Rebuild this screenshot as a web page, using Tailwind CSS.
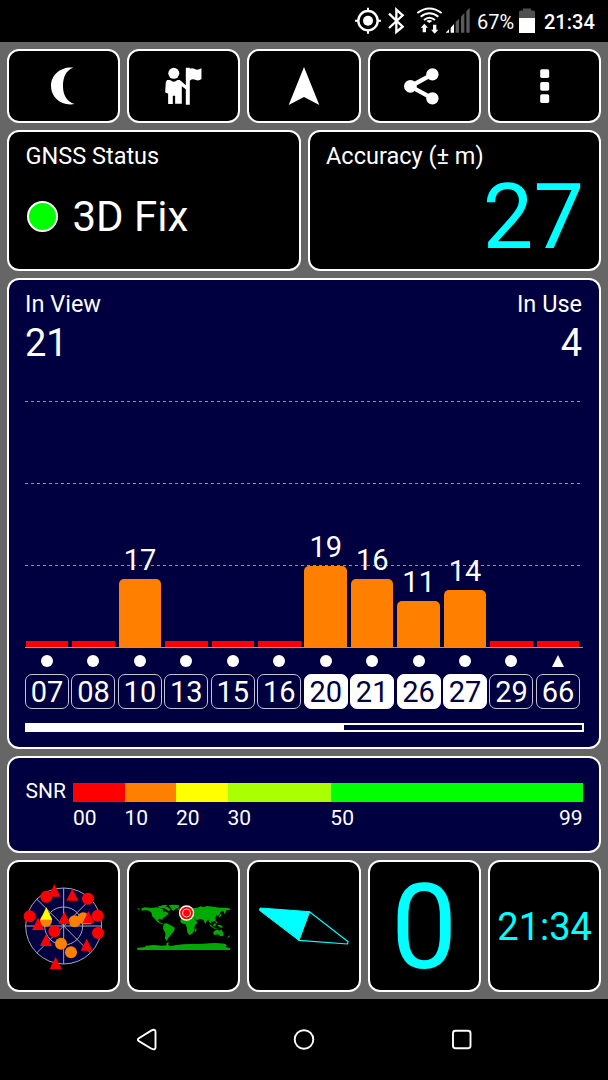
<!DOCTYPE html>
<html lang="en">
<head>
  <meta charset="UTF-8" />
  <meta name="viewport" content="width=device-width, initial-scale=1.0"/>
  <title>GPS Test</title>
  <script src="https://cdn.jsdelivr.net/npm/@tailwindcss/browser@4"></script>
</head>
<body class="w-[608px] h-[1080px] overflow-hidden bg-black text-white font-['Roboto',sans-serif] leading-none flex flex-col">

  <!-- Status bar -->
  <header class="h-[42px] flex items-start shrink-0">
    <svg class="ml-[340px] w-[137px] h-[42px]" viewBox="0 0 411 126" fill="none" stroke="#fff">
      <circle cx="84" cy="62" r="29" stroke-width="7"/>
      <circle cx="84" cy="62" r="15" fill="#fff" stroke="none"/>
      <path d="M84 23v12M84 89v12M45 62h12M111 62h12" stroke-width="6"/>
      <path d="M147 41L188 80 169 96V29L188 46 147 84" stroke-width="7"/>
      <path d="M232 39Q268 12 305 39M242 50Q268 29 295 50M252 60Q268 46 285 60" stroke-width="6"/>
      <path d="M259 63Q268 57 277 63L268 69Z" fill="#fff" stroke="none"/>
      <path d="M253 71L264 83H258V97H248V83H242ZM284 101L273 89H279V74H289V89H295Z" fill="#fff" stroke="none"/>
      <path d="M317 98L327 88V98ZM332 98V83L342 72V98Z" fill="#fff" stroke="none"/>
      <path d="M347 98V66L357 56V98ZM363 98V50L373 39V98ZM379 98V34L389 23V98Z" fill="#5a5a5a" stroke="none"/>
    </svg>
    <span class="mt-[12px] w-[42px] text-[20px] whitespace-nowrap">67%</span>
    <svg class="w-4 h-[42px]" viewBox="0 0 16 42">
      <path d="M0 12Q0 10.5 1.500 10.500H4V8.500H12V10.500H14.500Q16 10.500 16 12V18H0Z" fill="#505050"/>
      <path d="M0 18H16V33H0Z" fill="#fff"/>
    </svg>
    <span class="mt-[12px] ml-[9px] text-[20px] font-medium">21:34</span>
  </header>

  <main class="h-[957px] shrink-0 bg-[#666] px-[7px] pt-[7px] flex flex-col gap-[7px]">

    <!-- Toolbar -->
    <nav class="h-[74px] grid grid-cols-5 gap-[7px]">
      <button class="bg-black border-2 border-white rounded-xl">
        <svg class="w-full h-full" viewBox="27 45 327.600 210" fill="#fff">
          <path d="M220 95C184 91 153 116 153 150C153 185 184 211 224 204C200 198 189 176 189 150C189 124 198 102 220 95Z"/>
        </svg>
      </button>
      <button class="bg-black border-2 border-white rounded-xl">
        <svg class="w-full h-full" viewBox="387.600 45 327.600 210" fill="#fff">
          <circle cx="522" cy="112" r="16.500"/>
          <path d="M502 132H511Q522 143 533 132H540L558 148V95H570V98Q578 95 586 100 594 104 605 97V129Q597 136 588 132 578 127 570 134V206H558V160L546 151V203H526V179H519V204H505V173L496 169 498 138Z"/>
        </svg>
      </button>
      <button class="bg-black border-2 border-white rounded-xl">
        <svg class="w-full h-full" viewBox="249 51 109.200 70" fill="#fff">
          <path d="M304 67L319.300 105 304 97 288.700 105Z"/>
        </svg>
      </button>
      <button class="bg-black border-2 border-white rounded-xl">
        <svg class="w-full h-full" viewBox="89.800 153 327.600 210" fill="#fff">
          <path d="M277 223L211 259 277 295" fill="none" stroke="#fff" stroke-width="13"/>
          <circle cx="277" cy="223" r="18.500"/><circle cx="211" cy="259" r="19"/><circle cx="277" cy="295" r="18.500"/>
        </svg>
      </button>
      <button class="bg-black border-2 border-white rounded-xl">
        <svg class="w-full h-full" viewBox="449.400 153 327.600 210" fill="#fff">
          <rect x="600" y="208" width="27" height="26" rx="5"/>
          <rect x="600" y="246" width="27" height="26" rx="5"/>
          <rect x="600" y="283" width="27" height="26" rx="5"/>
        </svg>
      </button>
    </nav>

    <!-- Fix status + accuracy -->
    <section class="h-[141px] grid grid-cols-2 gap-[7px]">
      <div class="bg-black border-2 border-white rounded-xl pl-[16.500px] pt-[13px]">
        <h2 class="text-[23.500px]">GNSS Status</h2>
        <div class="flex items-center gap-[15px] mt-[26px] pl-px">
          <span class="size-[31px] rounded-full bg-[#00ff00] border-2 border-white"></span>
          <span class="text-[42px] pt-px">3D Fix</span>
        </div>
      </div>
      <div class="bg-black border-2 border-white rounded-xl pl-[16.500px] pr-[15px] pt-[13px]">
        <h2 class="text-[23.500px]">Accuracy (± m)</h2>
        <p class="text-[90px] text-[#00ffff] text-right mt-[4px]">27</p>
      </div>
    </section>

    <!-- Satellite signal chart -->
    <section class="h-[471px] bg-[#000040] border-2 border-white rounded-xl px-4 pt-[13px]">
      <div class="flex justify-between">
        <div>
          <h2 class="text-[23.500px]">In View</h2>
          <p class="text-[38px] mt-[7px]">21</p>
        </div>
        <div class="text-right pr-px">
          <h2 class="text-[23.500px]">In Use</h2>
          <p class="text-[38px] mt-[7px]">4</p>
        </div>
      </div>

      <div class="relative h-[286px] border-b border-[#9999b5] w-[558px]">
        <svg class="absolute left-0 bottom-0 w-[558px] h-[287px]" stroke="#9292ae" stroke-dasharray="3 3">
          <path d="M0 41.500H555M0 123.500H555M0 205.500H555"/>
        </svg>
        <div id="bars" class="relative h-full grid grid-cols-12 w-[557.400px] items-end"></div>
      </div>
      <div id="sats" class="grid grid-cols-12 w-[557.400px] mt-[7px]"></div>

      <div class="mt-[14px] w-[559px] h-[9px] border-2 border-white">
        <div class="h-full w-[317px] bg-white"></div>
      </div>
    </section>

    <!-- SNR legend -->
    <section class="h-[97px] bg-[#000040] border-2 border-white rounded-xl pl-4 pt-[25px] text-[21px]">
      <div class="flex">
        <span class="w-[48px] -mt-[2px] pl-[0.500px]">SNR</span>
        <div class="flex w-[510px] h-[19px]">
          <div class="flex-[10] bg-[#ff0000]"></div>
          <div class="flex-[10] bg-[#ff8000]"></div>
          <div class="flex-[10] bg-[#ffff00]"></div>
          <div class="flex-[20] bg-[#aaff00]"></div>
          <div class="flex-[49] bg-[#00ff00]"></div>
        </div>
      </div>
      <div class="flex ml-[48px] w-[509.500px] mt-[6px]">
        <div class="w-0 flex-[10]">00</div>
        <div class="w-0 flex-[10]">10</div>
        <div class="w-0 flex-[10]">20</div>
        <div class="w-0 flex-[20]">30</div>
        <div class="w-0 flex-[49] flex justify-between"><span>50</span><span>99</span></div>
      </div>
    </section>

    <!-- Page tiles -->
    <section class="h-[132px] grid grid-cols-5 gap-[7px] text-[#00ffff]">
      <div class="bg-black border-2 border-white rounded-xl">
        <svg class="w-full h-full" viewBox="27 21 327.600 384">
          <g fill="#000040" stroke="#a6a6b8" stroke-width="3">
            <circle cx="191" cy="213" r="114"/>
            <circle cx="191" cy="213" r="57"/>
            <path d="M77 213H305M191 99V327M110 132L272 294M110 294L272 132"/>
          </g>
          <g fill="#ff8000">
            <circle cx="138" cy="197" r="18"/><circle cx="224" cy="199" r="18"/><circle cx="250" cy="190" r="18"/>
            <path d="M236 194H274V208H250Z"/>
            <circle cx="183" cy="266" r="18"/><circle cx="213" cy="292" r="18"/>
          </g>
          <g fill="#ff0000">
            <circle cx="139" cy="125" r="18"/><circle cx="264" cy="131" r="18"/><circle cx="89" cy="184" r="18"/>
            <circle cx="293" cy="182" r="18"/><circle cx="294" cy="234" r="18"/><circle cx="163" cy="229" r="18"/>
            <path d="M163 88L181 125H145ZM217 101L235 137H199ZM193 170L211 206H175ZM265 168L283 205H247ZM114 188L132 225H96ZM138 237L156 273H120ZM260 251L278 287H242ZM167 306L185 342H149Z"/>
          </g>
          <path d="M139 157L157 194H121Z" fill="#ffff00"/>
        </svg>
      </div>
      <div class="bg-black border-2 border-white rounded-xl">
        <svg class="w-full h-full" viewBox="14.400 21 327.600 384">
          <g fill="#00aa00">
            <!-- Americas -->
            <path d="M39 159L48 162 43 165ZM52 160L62 157 82 159 98 157 110 160 119 165 115 172 124 169 134 176 126 182 118 188 113 195 106 191 101 195 106 201 114 205 119 209 112 207 100 202 92 192 84 184 82 174 76 168 65 165 52 167Z"/>
            <path d="M101 154L116 152 130 156 140 165 133 168 120 160 105 159ZM133 151L148 149 165 151 163 158 153 162 148 168 141 163 138 156ZM112 151L128 149 127 154 114 155Z"/>
            <path d="M119 206L128 205 139 211 152 218 149 229 142 237 137 244 132 248 128 258 122 251 124 235 117 223 117 213Z"/>
            <!-- Europe, Africa, Asia -->
            <path d="M170 183L171 174 180 168 184 161 195 156 205 160 218 158 230 154 238 157 248 153 268 155 286 158 306 158 318 161 318 165 306 166 304 174 300 177 298 168 290 170 286 178 281 184 277 180 274 188 275 196 266 201 261 198 263 207 256 202 252 194 248 197 243 207 238 195 226 191 222 195 214 194 206 184 211 191 218 200 219 203 211 213 211 225 203 237 195 240 189 232 188 218 184 208 172 205 168 198 172 188Z"/>
            <path d="M215 220L218 223 214 231 211 229ZM171 163L176 161 177 169 172 170ZM159 161L167 160 166 164 160 164ZM286 180L292 175 291 183 283 188ZM255 205L264 214 270 218 283 220 270 221 258 213ZM266 211L272 204 276 209 271 215ZM279 209L291 211 297 217 289 218 281 213ZM272 196L277 199 280 206 275 204Z"/>
            <path d="M267 231L275 225 283 225 287 228 291 223 298 235 297 243 288 243 280 238 269 240ZM315 241L318 243 311 249 308 250Z"/>
            <!-- Antarctica -->
            <path d="M39 278L60 277 66 272 90 270 112 272 128 271 125 266 134 261 132 269 138 274 156 270 178 268 200 267 220 267 236 266 255 265 274 264 302 266 308 271 304 276 318 279V285H39Z"/>
          </g>
          <circle cx="187" cy="174" r="23" fill="#fff"/>
          <circle cx="187" cy="174" r="19" fill="#ff0000"/>
          <circle cx="187" cy="174" r="12" fill="#ff0000" stroke="#fff" stroke-width="2.500"/>
        </svg>
      </div>
      <div class="bg-black border-2 border-white rounded-xl">
        <svg class="w-full h-full" viewBox="15.600 21 327.600 384" stroke="#00ffff" stroke-width="3" stroke-linejoin="round">
          <path d="M49 159L197 170 165 256 47 166Z" fill="#00ffff"/>
          <path d="M197 170L313 260 311 267 165 256Z" fill="none" stroke-width="3.500"/>
        </svg>
      </div>
      <div class="bg-black border-2 border-white rounded-xl text-[118px] text-center pt-[7px]">0</div>
      <div class="bg-black border-2 border-white rounded-xl text-[38px] pl-[7.500px] pt-[46px]">21:34</div>
    </section>
  </main>

  <!-- Android nav bar -->
  <footer class="h-[81px] grid grid-cols-[157.5px_157.5px_157.5px] justify-center items-center justify-items-center">
    <svg class="w-6 h-6" viewBox="0 0.500 24 24" fill="none" stroke="#fff" stroke-width="1.900" stroke-linejoin="round">
      <path d="M3.900 10.800L16.500 2.900Q20.500 1 20.500 4.500V19.800Q20.500 23 16.500 21.200L3.900 13.600Q1.800 12.200 3.900 10.800Z"/>
    </svg>
    <svg class="w-6 h-6" viewBox="0 0.500 24 24" fill="none" stroke="#fff" stroke-width="1.900">
      <circle cx="12" cy="12" r="9.300"/>
    </svg>
    <svg class="w-6 h-6" viewBox="0 0.500 24 24" fill="none" stroke="#fff" stroke-width="1.900">
      <rect x="3" y="3.200" width="17.500" height="17.500" rx="2.500"/>
    </svg>
  </footer>

  <script>
    // h is the bar height in px, snr is only shown above zero
    const sats = [
      { id: '07', h: 6 },
      { id: '08', h: 6 },
      { id: '10', snr: 17, h: 68 },
      { id: '13', h: 6 },
      { id: '15', h: 6 },
      { id: '16', h: 6 },
      { id: '20', snr: 19, h: 80.5, used: true },
      { id: '21', snr: 16, h: 68, used: true },
      { id: '26', snr: 11, h: 46, used: true },
      { id: '27', snr: 14, h: 56.5, used: true },
      { id: '29', h: 6 },
      { id: '66', h: 6, glonass: true },
    ];

    document.getElementById('bars').innerHTML = sats.map(s => `
      <div class="w-[42.500px] ml-[0.800px] text-center text-[29px]">
        ${s.snr ? `<div class="mb-[4px]">${s.snr}</div>` : ''}
        <div class="${s.snr ? 'bg-[#ff8000] rounded-t-[5px]' : 'bg-[#ff0000]'}" style="height:${s.h}px"></div>
      </div>`).join('');

    document.getElementById('sats').innerHTML = sats.map(s => `
      <div class="w-[44px] flex flex-col items-center">
        <svg class="w-3 h-3" viewBox="0 0 12 12" fill="#fff">
          ${s.glonass ? '<path d="M6 0L12 12H0Z"/>' : '<circle cx="6" cy="6" r="6"/>'}
        </svg>
        <div class="mt-[7px] w-full h-[35px] pt-[3px] text-center text-[29px] border rounded-[7px] ${s.used ? 'bg-white border-white text-[#000040]' : 'border-[#c4c4d2]'}">${s.id}</div>
      </div>`).join('');
  </script>
</body>
</html>
